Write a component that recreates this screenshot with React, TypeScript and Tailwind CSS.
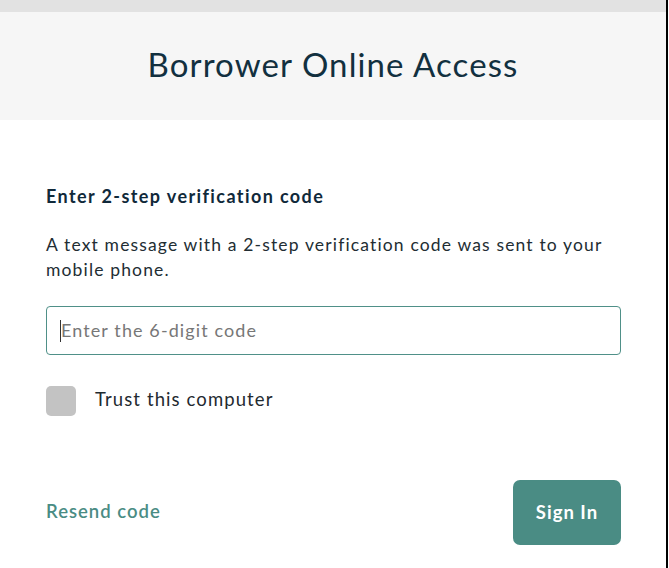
export default function App() {
  return (
    <div className="w-[669px] h-[568px] bg-white overflow-hidden flex font-['Lato',sans-serif]">
      <div className="w-[666px] flex flex-col">
        <div className="h-[12px] bg-[#e2e2e2]" />
        <div className="h-[108px] bg-[#f6f6f6] flex items-center justify-center">
          <h1 className="text-[33px] text-[#12303f] tracking-[1.1px] pb-[3px]">Borrower Online Access</h1>
        </div>
        <div className="px-[46px] pt-[64px] pr-[45px]">
          <p className="text-[18px] font-bold text-[#10293a] leading-[24px] tracking-[1.4px]">Enter 2-step verification code</p>
          <p className="mt-[24px] text-[17.5px] leading-[25px] text-[#222d33] tracking-[1.15px]">
            A text message with a 2-step verification code was sent to your mobile phone.
          </p>
          <div className="mt-[24px] h-[49px] border border-[#4f9088] rounded-[4px] flex items-center px-[13px]">
            <span className="w-px h-[22px] bg-[#333]" />
            <span className="text-[18px] text-[#777] tracking-[1.1px]">Enter the 6-digit code</span>
          </div>
          <div className="mt-[31px] flex items-center">
            <div className="w-[30px] h-[30px] rounded-[5px] bg-[#c3c3c3]" />
            <span className="ml-[19px] text-[18.5px] text-[#1f2a30] tracking-[1.1px] pb-[2px]">Trust this computer</span>
          </div>
          <div className="mt-[64px] flex items-center justify-between">
            <span className="text-[18.5px] font-semibold text-[#4a8c84] tracking-[1px] pb-[2px]">Resend code</span>
            <button className="w-[108px] h-[65px] rounded-[7px] bg-[#4a8c84] text-white text-[18.5px] font-bold tracking-[1px]">Sign In</button>
          </div>
        </div>
      </div>
      <div className="w-[2px] bg-black" />
      <div className="flex-1 bg-white" />
    </div>
  );
}
